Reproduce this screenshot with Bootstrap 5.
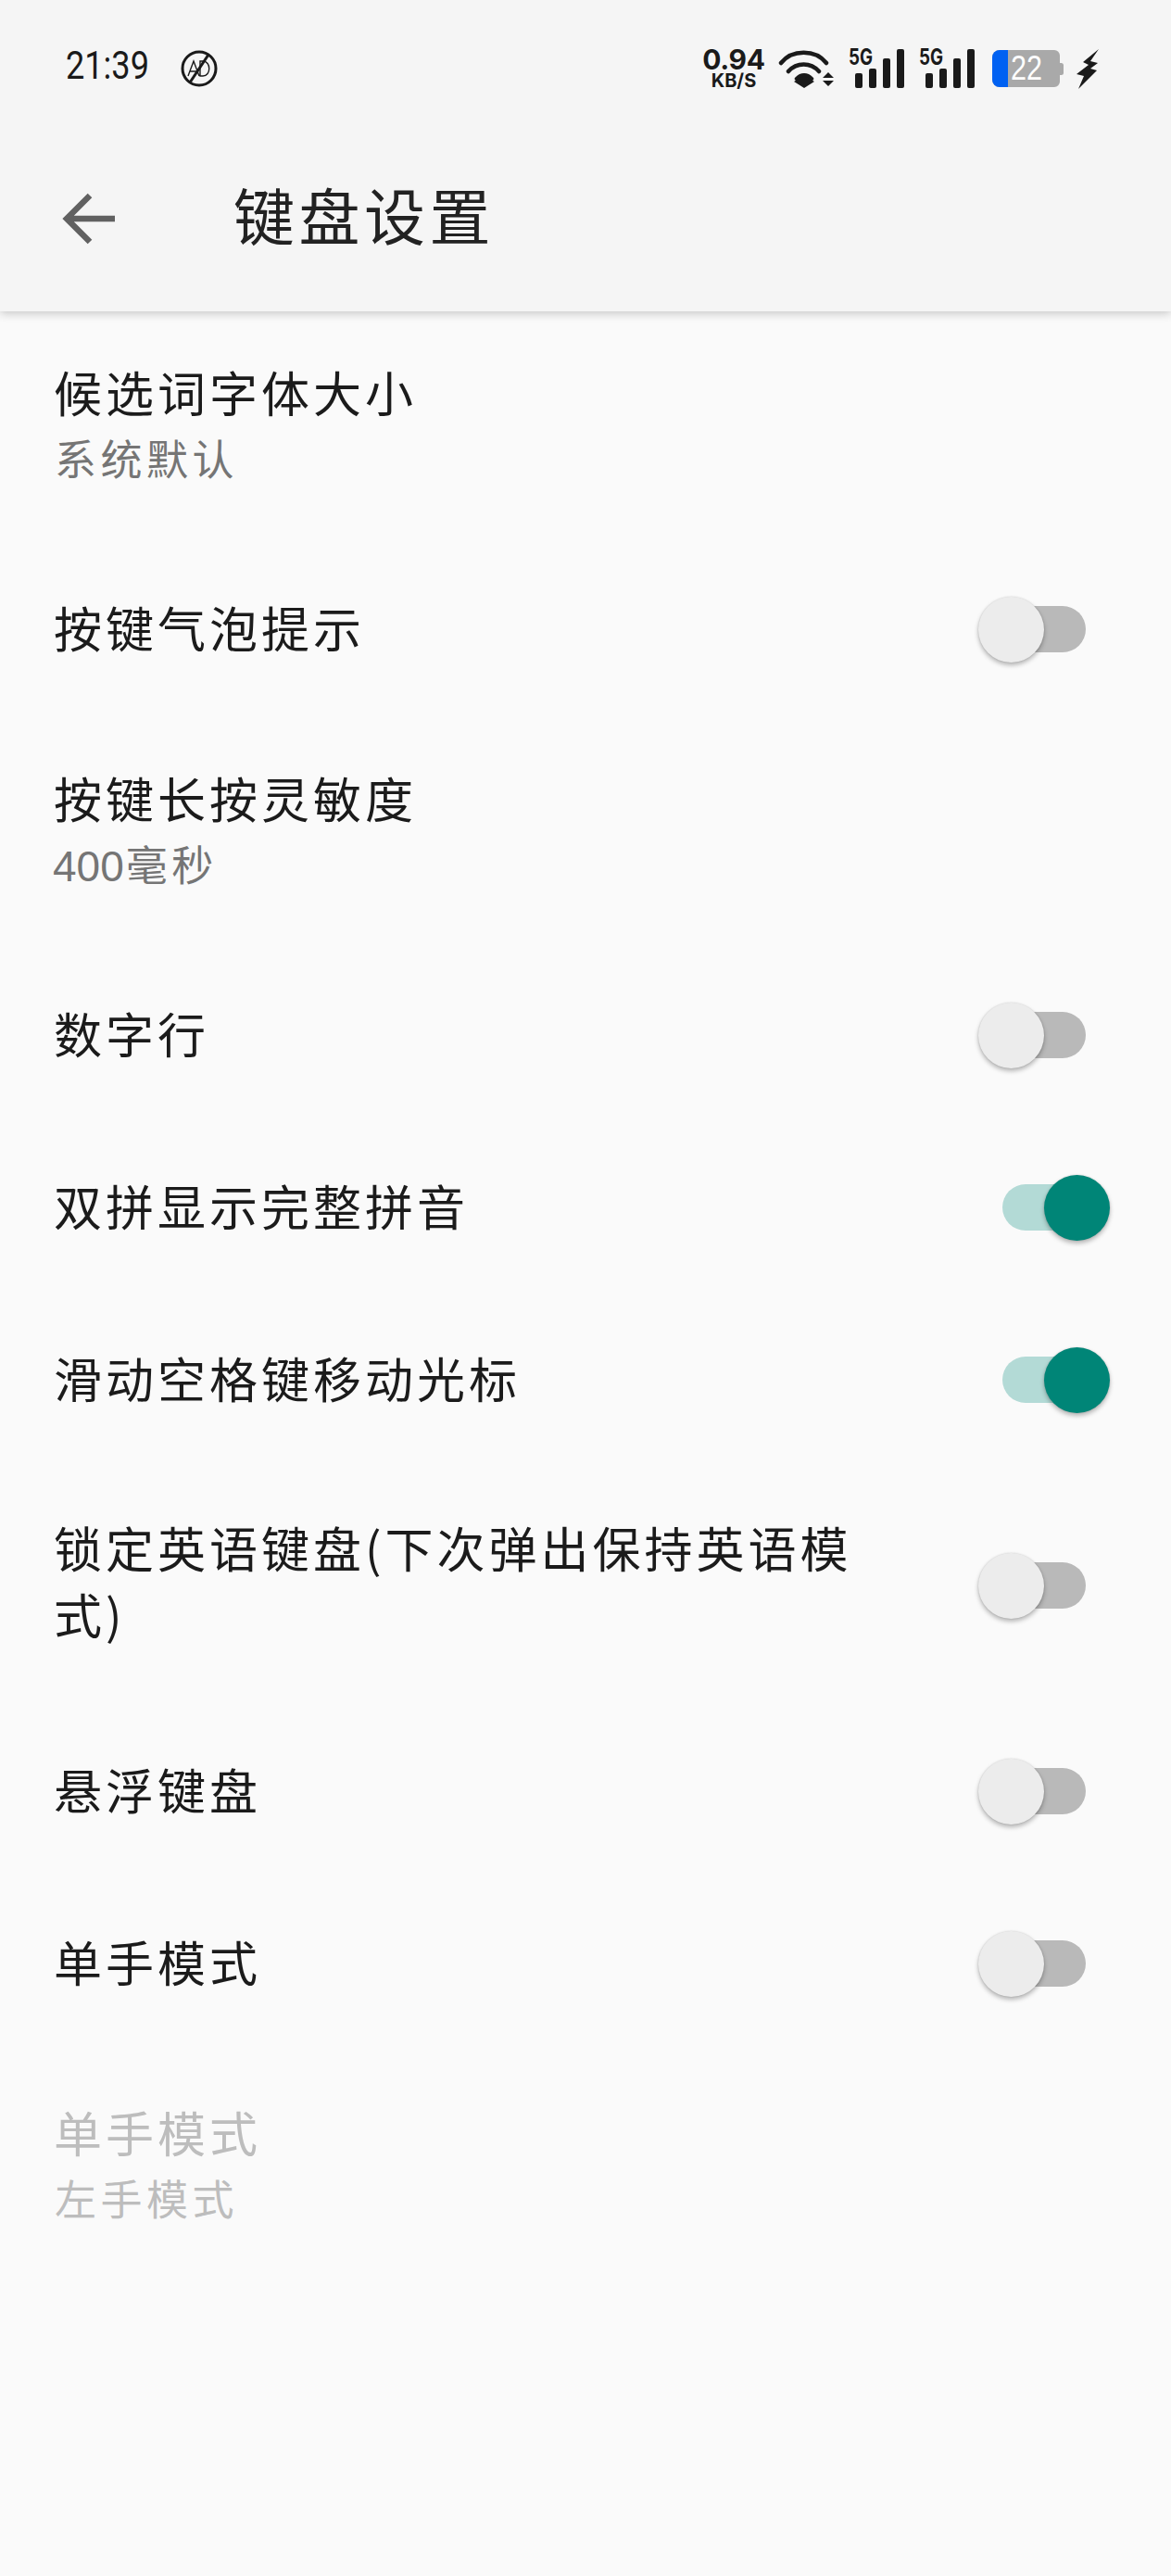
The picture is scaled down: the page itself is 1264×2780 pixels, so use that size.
<!DOCTYPE html>
<html lang="zh-CN">
<head>
<meta charset="utf-8">
<title>键盘设置</title>
<link href="https://cdn.jsdelivr.net/npm/bootstrap@5.3.0/dist/css/bootstrap.min.css" rel="stylesheet">
<style>
html,body{height:100%}
body{background:#fafafa;font-family:"Noto Sans CJK SC","Liberation Sans",sans-serif;color:#1b1b1b;min-height:2780px}
.app-head{background:#f5f5f5;height:336px;box-shadow:0 2px 10px rgba(0,0,0,.22);position:relative}
.status-line{height:136px;padding:12px 78px 0 71px}
.clock{display:block;font:42px/1 Roboto,"Liberation Sans",sans-serif;color:#1a1a1a;width:124px;margin-bottom:7px;transform:scaleX(.86);transform-origin:left center;white-space:nowrap}
.speed{width:70px;margin-left:auto;margin-right:13px;text-align:center;font-family:Inter,"Liberation Sans",sans-serif;font-weight:700;color:#1a1a1a;line-height:1;white-space:nowrap}
.speed-top{font-size:30px;line-height:24px;letter-spacing:-.3px}
.speed-low{font-size:20px;line-height:18px;margin-top:2px}
.tool-line{height:200px;padding-left:67px}
.tool-title{font-size:66px;line-height:1;letter-spacing:4.5px;margin-left:128px;color:#222;margin-bottom:12px}
.pref{padding:54px 98px 54px 58px;min-height:186px}
.pref-first{padding-top:51px;padding-bottom:55px}
.pref-num{padding-top:55px;padding-bottom:55px}
.pref-wrap{padding-top:54px;padding-bottom:58px;margin-bottom:2px}
.pref-wrap .toggle{margin-top:10px}
.pref-off{padding-top:55px}
.pref-name{font-size:52px;line-height:72px;letter-spacing:4px;max-width:890px}
.pref-value{font-size:45px;line-height:70px;height:70px;letter-spacing:4.500px;color:#757575;margin-left:1px}
.digits{font-family:"Liberation Sans",sans-serif;font-size:46px;letter-spacing:0;margin-left:-2px;margin-right:2px}
.pref-off .pref-name,.pref-off .pref-value{color:#bdbdbd}
.toggle{position:relative;display:block;width:90px;height:50px;border-radius:25px;background:#b9b9b9;margin-left:auto;margin-right:-6px;margin-top:3px;flex:none}
.toggle::after{content:"";position:absolute;left:-26px;top:-10px;width:71px;height:71px;border-radius:50%;background:#ececec;box-shadow:0 3px 5px rgba(0,0,0,.28),0 0 2px rgba(0,0,0,.14)}
.toggle.on{background:#b3dad6}
.toggle.on::after{left:45px;background:#008577}
.net-icon{margin-top:-6px}
</style>
</head>
<body>
<header class="app-head">
  <div class="status-line d-flex align-items-center">
    <span class="clock">21:39</span>
    <svg width="40" height="40" viewBox="0 0 40 40" fill="none" stroke="#1a1a1a">
      <circle cx="20" cy="20" r="18" stroke-width="3"/>
      <path d="M10 35 30 5" stroke-width="3"/>
      <path d="M8 28 14 12 20 28M10.500 23h7M21 12v16h3c9 0 9-16 0-16z" stroke-width="1.400"/>
    </svg>
    <div class="speed"><div class="speed-top">0.94</div><div class="speed-low">KB/S</div></div>
    <svg width="60" height="43" viewBox="0 0 60 43" fill="none" stroke="#1a1a1a" stroke-width="4.500" stroke-linecap="round">
      <path d="M3 15C15 0 40 0 52 15M11 24c9-10 24-10 33 0M20 32c5-5 11-5 16 0"/>
      <path d="M17 36l11-6 11 6-11 7z" transform="translate(0 -1)" fill="#1a1a1a" stroke="none"/>
      <path d="M48 31l6-6 6 6zM48 34h12l-6 6z" fill="#1a1a1a" stroke="none"/>
    </svg>
    <svg class="ms-3 net-icon" width="60" height="50" viewBox="0 -6 60 50" fill="#1a1a1a">
      <text x="0" y="18" font-family="Inter,Liberation Sans,sans-serif" font-weight="700" font-size="24" textLength="26" lengthAdjust="spacingAndGlyphs">5G</text>
      <rect x="7" y="27" width="8" height="16" rx="2"/><rect x="22" y="22" width="8" height="21" rx="2"/><rect x="37" y="11" width="8" height="32" rx="2"/><rect x="52" y="1" width="8" height="42" rx="2"/>
    </svg>
    <svg class="ms-3 net-icon" width="60" height="50" viewBox="0 -6 60 50" fill="#1a1a1a">
      <text x="0" y="18" font-family="Inter,Liberation Sans,sans-serif" font-weight="700" font-size="24" textLength="26" lengthAdjust="spacingAndGlyphs">5G</text>
      <rect x="7" y="27" width="8" height="16" rx="2"/><rect x="22" y="22" width="8" height="21" rx="2"/><rect x="37" y="11" width="8" height="32" rx="2"/><rect x="52" y="1" width="8" height="42" rx="2"/>
    </svg>
    <svg style="margin-left:19px" width="77" height="40" viewBox="0 0 77 40">
      <path d="M8 0h59a6 6 0 0 1 6 6v8h1.500a2.500 2.500 0 0 1 2.500 2.500v8a2.500 2.500 0 0 1-2.500 2.500H73v7a6 6 0 0 1-6 6H8a8 8 0 0 1-8-8V8a8 8 0 0 1 8-8z" fill="#a9a9a9"/>
      <path d="M8 0h9v40H8a8 8 0 0 1-8-8V8a8 8 0 0 1 8-8z" fill="#0061f2"/>
      <text x="20" y="32" fill="#fff" font-family="Liberation Sans,sans-serif" font-size="36" textLength="34" lengthAdjust="spacingAndGlyphs">22</text>
    </svg>
    <svg style="margin-left:14px" width="24" height="43" viewBox="0 0 24 43" fill="#1a1a1a"><path d="M24 0 7 14l6 3L0 27l8 2L2 43l20-20-7-2 8-6-8-2z"/></svg>
  </div>
  <div class="tool-line d-flex align-items-center">
    <svg width="57" height="56" viewBox="0 0 57 56" fill="none" stroke="#616161" stroke-width="6.500"><path d="M57 28H5M30 3 5 28l25 25"/></svg>
    <h1 class="tool-title fw-normal">键盘设置</h1>
  </div>
</header>
<main>
  <div class="pref pref-first"><div class="pref-name">候选词字体大小</div><div class="pref-value">系统默认</div></div>
  <div class="pref d-flex align-items-center"><div class="pref-name">按键气泡提示</div><span class="toggle"></span></div>
  <div class="pref pref-num"><div class="pref-name">按键长按灵敏度</div><div class="pref-value"><span class="digits">400</span>毫秒</div></div>
  <div class="pref d-flex align-items-center"><div class="pref-name">数字行</div><span class="toggle"></span></div>
  <div class="pref d-flex align-items-center"><div class="pref-name">双拼显示完整拼音</div><span class="toggle on"></span></div>
  <div class="pref d-flex align-items-center"><div class="pref-name">滑动空格键移动光标</div><span class="toggle on"></span></div>
  <div class="pref pref-wrap d-flex align-items-center"><div class="pref-name">锁定英语键盘(下次弹出保持英语模式)</div><span class="toggle"></span></div>
  <div class="pref d-flex align-items-center"><div class="pref-name">悬浮键盘</div><span class="toggle"></span></div>
  <div class="pref d-flex align-items-center"><div class="pref-name">单手模式</div><span class="toggle"></span></div>
  <div class="pref pref-off"><div class="pref-name">单手模式</div><div class="pref-value">左手模式</div></div>
</main>
<script src="https://cdn.jsdelivr.net/npm/bootstrap@5.3.0/dist/js/bootstrap.bundle.min.js"></script>
</body>
</html>
